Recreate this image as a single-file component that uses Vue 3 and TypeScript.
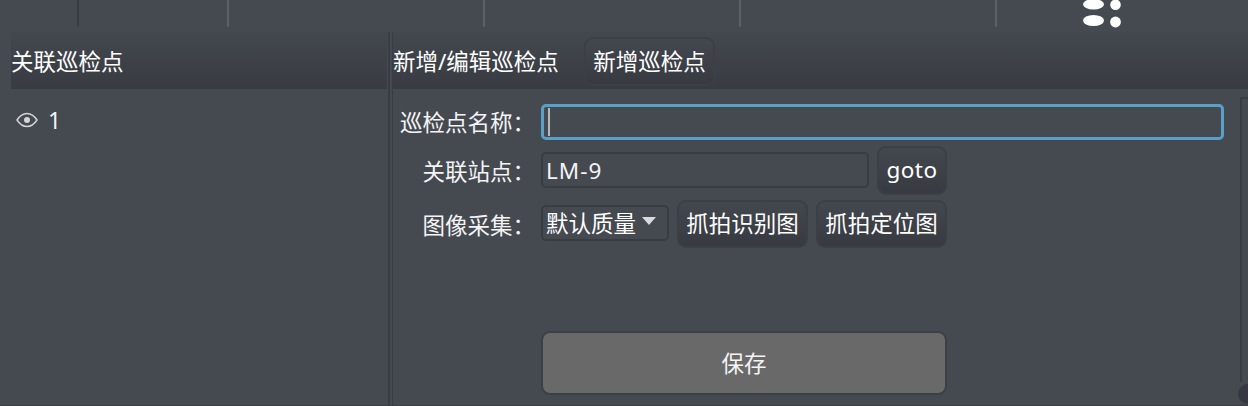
<script setup lang="ts">
const ticks: number[] = [150, 256, 256, 256]
</script>

<template>
  <div class="page">
    <div class="topbar">
      <span class="tick first"></span>
      <span v-for="(w, i) in ticks" :key="i" class="tick" :style="{ marginLeft: w - 2 + 'px' }"></span>
      <svg class="grip" width="40" height="28" viewBox="0 0 40 28">
        <ellipse cx="10.500" cy="4.300" rx="10.500" ry="5.200" fill="#fff" />
        <circle cx="32.500" cy="4.800" r="5.300" fill="#fff" />
        <ellipse cx="10.500" cy="20.500" rx="10.500" ry="5.500" fill="#fff" />
        <circle cx="32.500" cy="22" r="5.400" fill="#fff" />
      </svg>
    </div>
    <div class="main">
      <section class="left">
        <header class="head">关联巡检点</header>
        <div class="item">
          <svg class="eye" width="22" height="16" viewBox="0 0 22 16">
            <path d="M1 8C4 3.500 7.500 1.500 11 1.500S18 3.500 21 8C18 12.500 14.500 14.500 11 14.500S4 12.500 1 8Z" fill="none" stroke="#d5d6d8" stroke-width="1.400" />
            <circle cx="11" cy="8" r="3" fill="#d5d6d8" />
          </svg>
          <span class="num">1</span>
        </div>
      </section>
      <div class="divider"></div>
      <section class="right">
        <header class="head tabs">
          <span class="crumb">新增/编辑巡检点</span>
          <button class="btn tab" type="button">新增巡检点</button>
        </header>
        <div class="body">
          <form class="form" @submit.prevent>
            <div class="row r1">
              <label>巡检点名称：</label>
              <div class="input focus"><i class="caret"></i></div>
            </div>
            <div class="row r2">
              <label>关联站点：</label>
              <div class="input site">LM-9</div>
              <button class="btn goto" type="button">goto</button>
            </div>
            <div class="row r3">
              <label>图像采集：</label>
              <div class="select">默认质量<i class="arrow"></i></div>
              <button class="btn shot" type="button">抓拍识别图</button>
              <button class="btn shot" type="button">抓拍定位图</button>
            </div>
            <div class="row r4">
              <label></label>
              <button class="save" type="button">保存</button>
            </div>
          </form>
          <div class="track"></div>
          <div class="knob"></div>
        </div>
      </section>
    </div>
  </div>
</template>

<style>
html, body { margin: 0; background: #454950; overflow: hidden; }
</style>

<style scoped>
.page {
  width: 1248px;
  height: 406px;
  box-sizing: border-box;
  background: #454950;
  color: #fff;
  font-family: "Noto Sans", "Noto Sans CJK SC", sans-serif;
  font-size: 22.500px;
  line-height: 1;
  overflow: hidden;
  border-bottom: 1px solid #3a3d44;
  display: flex;
  flex-direction: column;
}
.topbar {
  height: 27px;
  margin-bottom: 5px;
  display: flex;
  flex: none;
  position: relative;
}
.tick {
  width: 2px;
  height: 27px;
  background: #5e5f62;
}
.tick.first { margin-left: 77px; background: #393c43; }
.grip {
  flex: none;
  margin-left: 86px;
  overflow: visible;
}
.main {
  flex: 1;
  display: flex;
  min-height: 0;
}
.left {
  width: 376px;
  margin-left: 11px;
  flex: none;
}
.divider {
  width: 5px;
  margin-left: 1px;
  flex: none;
  box-sizing: border-box;
  border-left: 2px solid #393c43;
  border-right: 1px solid #393c43;
}
.right {
  flex: 1;
  min-width: 0;
  display: flex;
  flex-direction: column;
}
.head {
  height: 57px;
  box-sizing: border-box;
  padding-top: 4px;
  background: linear-gradient(#43474e, #383b42);
  display: flex;
  align-items: center;
}
.crumb {
  width: 191px;
  flex: none;
}
.item {
  display: flex;
  align-items: center;
  height: 24px;
  margin-top: 19px;
  padding-left: 5px;
  gap: 10px;
  color: #f2f3f4;
}
.num { font-size: 23px; }
.btn {
  font: inherit;
  color: #fff;
  padding: 0;
  box-sizing: border-box;
  border: 2px solid #3c3f46;
  border-radius: 9px;
  background: linear-gradient(#43474e, #373a41);
}
.tab {
  width: 131px;
  height: 49px;
  align-self: flex-start;
  margin-top: 1px;
  padding-top: 2px;
}
.body {
  flex: 1;
  position: relative;
  min-height: 0;
}
.form {
  padding-top: 15px;
  display: flex;
  flex-direction: column;
}
.row {
  display: flex;
  align-items: flex-start;
  gap: 6px;
}
.row label {
  width: 142px;
  flex: none;
  padding-left: 1px;
  box-sizing: border-box;
  text-align: right;
  color: #f4f4f5;
}
.row > button { margin-left: 2px; }
.r1 { height: 36px; }
.r2 { height: 49px; margin-top: 6px; }
.r3 { height: 48px; margin-top: 5px; }
.r4 { height: 64px; margin-top: 83px; }
.r1 label { margin-top: 8px; }
.r2 label { margin-top: 15px; }
.r3 label { margin-top: 15px; }
.input {
  box-sizing: border-box;
  height: 36px;
  border-radius: 5px;
  border: 2px solid #393c43;
  display: flex;
  align-items: center;
}
.focus {
  width: 683px;
  border: 3px solid #5a9fc8;
  padding-left: 4px;
}
.caret {
  width: 2px;
  height: 28px;
  background: #b7b8ba;
}
.site {
  width: 328px;
  margin-top: 6px;
  padding-left: 3px;
  padding-top: 2px;
  color: #f4f4f5;
  letter-spacing: 1px;
}
.goto { width: 70px; height: 49px; letter-spacing: 0.5px; }
.select {
  box-sizing: border-box;
  width: 128px;
  height: 36px;
  margin-top: 5px;
  padding-left: 3px;
  padding-top: 2px;
  border: 2px solid #393c43;
  border-radius: 5px;
  display: flex;
  align-items: center;
}
.arrow {
  width: 0;
  height: 0;
  margin: -6px 0 0 6px;
  border-left: 7px solid transparent;
  border-right: 7px solid transparent;
  border-top: 8px solid #d9dadb;
}
.shot { width: 131px; height: 48px; }
.save {
  font: inherit;
  width: 406px;
  height: 64px;
  box-sizing: border-box;
  padding-top: 3px;
  color: #f4f4f5;
  background: #696969;
  border: 2px solid #3c3f46;
  border-radius: 9px;
}
.r4 .save { margin-left: 0; }
.track {
  position: absolute;
  left: 847px;
  top: 8px;
  width: 8px;
  height: 285px;
  box-sizing: border-box;
  border-left: 2px solid #393c43;
  border-top: 2px solid #393c43;
}
.knob {
  position: absolute;
  left: 845px;
  top: 295px;
  width: 20px;
  height: 20px;
  border-radius: 50%;
  background: #353840;
}
</style>
